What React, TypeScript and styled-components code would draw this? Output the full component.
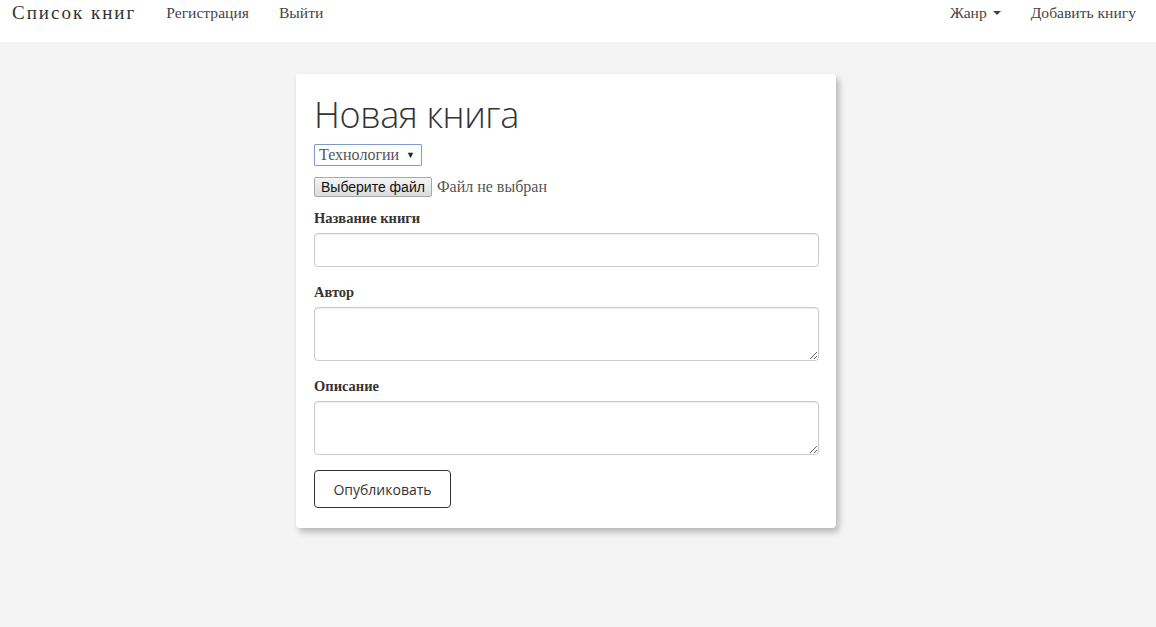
import React from "react";
import styled, { createGlobalStyle } from "styled-components";

const Global = createGlobalStyle`
  html, body { margin: 0; padding: 0; }
  body {
    background: #f4f4f4;
    font-family: "Liberation Serif", "DejaVu Serif", serif;
    color: #333;
    min-height: 627px;
  }
  * { box-sizing: border-box; }
`;

const Navbar = styled.nav`
  height: 42px;
  background: #fff;
  display: flex;
  align-items: flex-start;
  justify-content: space-between;
  padding: 0 20px 0 12px;
`;

const NavGroup = styled.div<{ $gap: number }>`
  display: flex;
  align-items: center;
  height: 25px;
  gap: ${(p) => p.$gap}px;
`;

const Brand = styled.a`
  font-family: "Liberation Serif", serif;
  font-size: 19px;
  letter-spacing: 2px;
  color: #333;
  text-decoration: none;
`;

const NavLink = styled.a`
  font-family: "Liberation Serif", serif;
  font-size: 15.6px;
  color: #444;
  text-decoration: none;
  display: inline-flex;
  align-items: center;
`;

const Caret = styled.span`
  display: inline-block;
  width: 0;
  height: 0;
  margin-left: 6px;
  border-top: 4px solid #444;
  border-left: 4px solid transparent;
  border-right: 4px solid transparent;
`;

const Main = styled.main`
  display: flex;
  justify-content: center;
  padding: 32px 24px 0 0;
`;

const Card = styled.section`
  width: 540px;
  background: #fff;
  border-radius: 4px;
  padding: 21px 17px 20px 18px;
  box-shadow: 3px 4px 6px rgba(0, 0, 0, 0.25);
`;

const Title = styled.h1`
  margin: 0;
  font-family: "Open Sans", sans-serif;
  font-weight: 300;
  font-size: 36px;
  line-height: 40px;
  color: #333;
  letter-spacing: -0.4px;
`;

const FakeSelect = styled.div`
  display: inline-flex;
  align-items: center;
  height: 22px;
  margin-top: 9px;
  padding: 0 6px 0 4px;
  border: 1px solid #7f9cc9;
  border-radius: 1px;
  font-family: "Liberation Serif", serif;
  font-size: 16px;
  color: #555;
  gap: 7px;
`;

const Arrow = styled.span`
  font-size: 9px;
  color: #222;
`;

const FileRow = styled.div`
  display: flex;
  align-items: center;
  margin-top: 11px;
  gap: 5px;
`;

const FileButton = styled.button`
  height: 20px;
  padding: 0 6px;
  font-family: "Liberation Sans", Arial, sans-serif;
  font-size: 14px;
  color: #111;
  background: linear-gradient(#f4f4f4, #dcdcdc);
  border: 1px solid #a8a8a8;
  border-radius: 2px;
`;

const FileText = styled.span`
  font-family: "Liberation Serif", serif;
  font-size: 16px;
  color: #555;
`;

const Group = styled.div<{ $top: number }>`
  margin-top: ${(p) => p.$top}px;
  display: flex;
  flex-direction: column;
`;

const Label = styled.label`
  font-family: "Liberation Serif", serif;
  font-weight: bold;
  font-size: 14.5px;
  line-height: 20px;
  height: 20px;
  margin-bottom: 5px;
  color: #333;
`;

const TextInput = styled.input`
  height: 34px;
  width: 100%;
  border: 1px solid #ccc;
  border-radius: 4px;
  box-shadow: inset 0 1px 1px rgba(0, 0, 0, 0.075);
  padding: 6px 12px;
  font-size: 14px;
`;

const TextArea = styled.textarea`
  height: 54px;
  width: 100%;
  display: block;
  border: 1px solid #ccc;
  border-radius: 4px;
  box-shadow: inset 0 1px 1px rgba(0, 0, 0, 0.075);
  padding: 6px 12px;
  font-size: 14px;
  resize: vertical;
`;

const Submit = styled.button`
  margin-top: 15px;
  width: 137px;
  height: 38px;
  background: #fff;
  border: 1px solid #333;
  border-radius: 4px;
  font-family: "Open Sans", sans-serif;
  font-size: 14px;
  color: #333;
`;

export default function App() {
  return (
    <>
      <Global />
      <Navbar>
        <NavGroup $gap={30}>
          <Brand href="#">Список книг</Brand>
          <NavLink href="#">Регистрация</NavLink>
          <NavLink href="#">Выйти</NavLink>
        </NavGroup>
        <NavGroup $gap={30}>
          <NavLink href="#">
            Жанр
            <Caret />
          </NavLink>
          <NavLink href="#">Добавить книгу</NavLink>
        </NavGroup>
      </Navbar>
      <Main>
        <Card>
          <Title>Новая книга</Title>
          <FakeSelect>
            Технологии
            <Arrow>▼</Arrow>
          </FakeSelect>
          <FileRow>
            <FileButton type="button">Выберите файл</FileButton>
            <FileText>Файл не выбран</FileText>
          </FileRow>
          <Group $top={11}>
            <Label>Название книги</Label>
            <TextInput type="text" />
          </Group>
          <Group $top={15}>
            <Label>Автор</Label>
            <TextArea />
          </Group>
          <Group $top={15}>
            <Label>Описание</Label>
            <TextArea />
          </Group>
          <Submit type="button">Опубликовать</Submit>
        </Card>
      </Main>
    </>
  );
}
